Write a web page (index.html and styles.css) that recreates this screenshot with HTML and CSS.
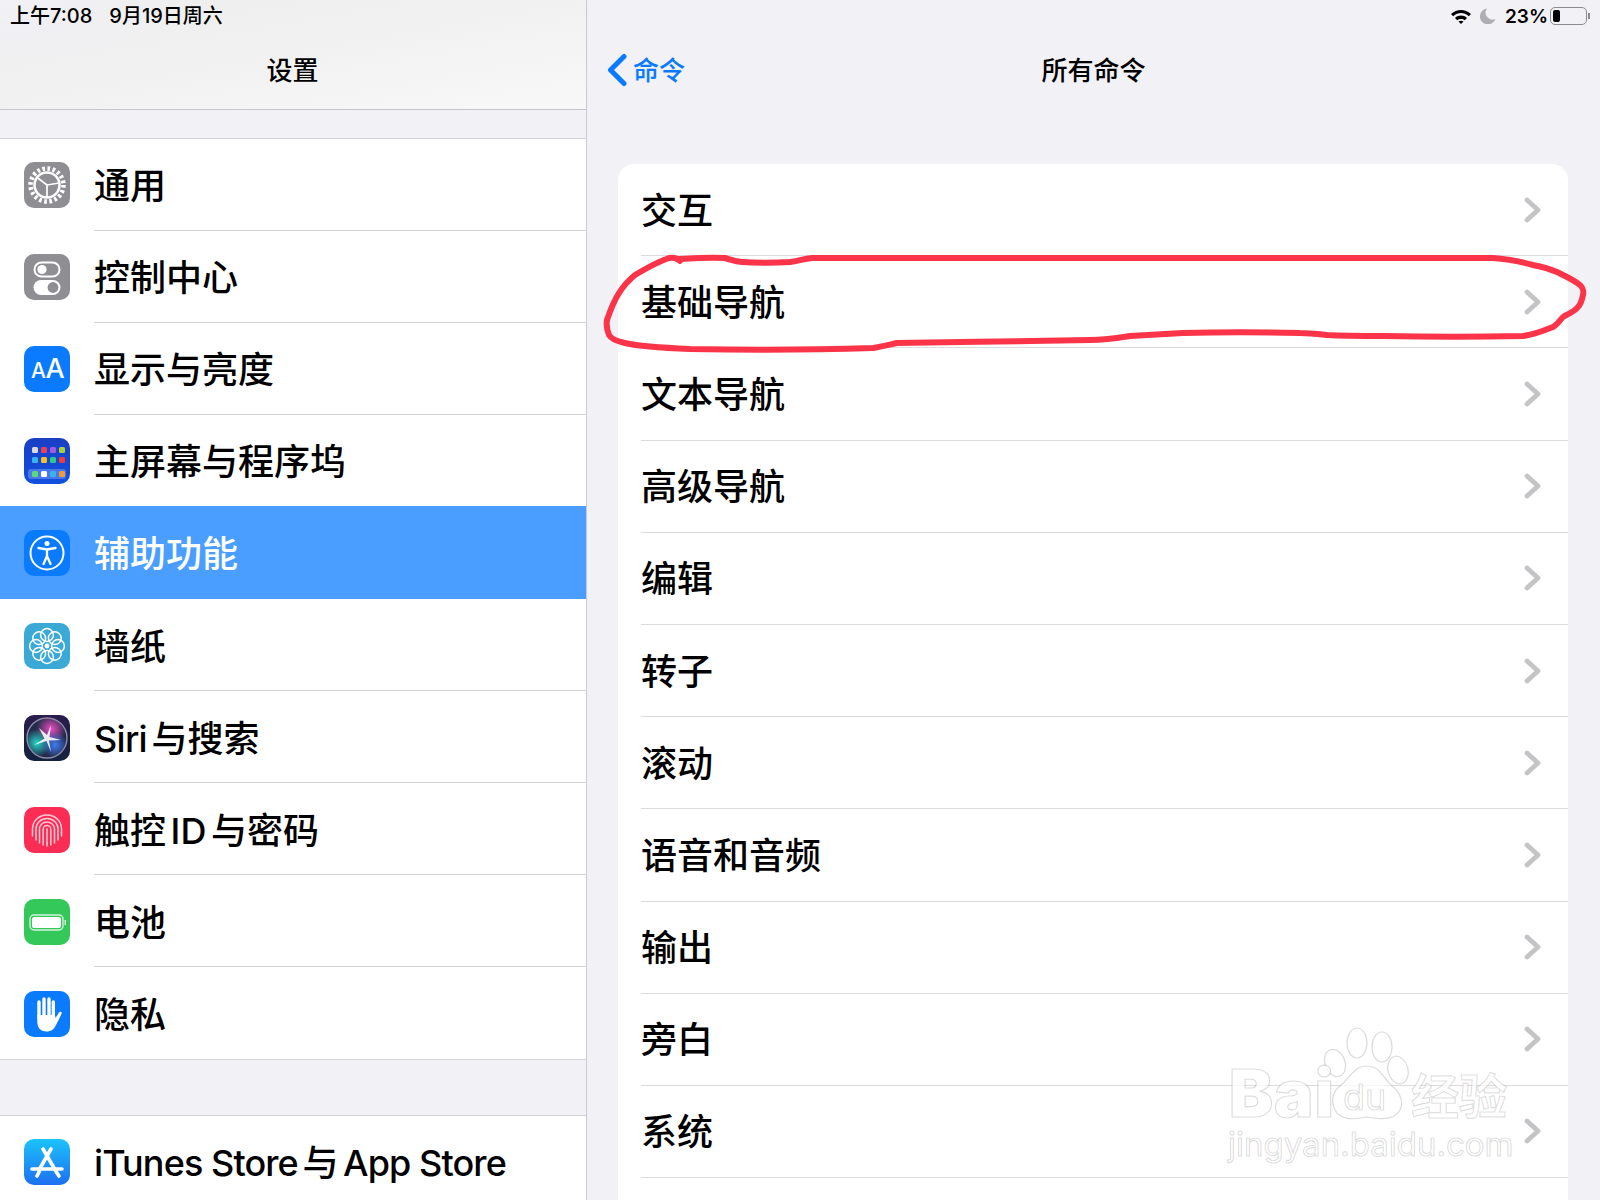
FILE: index.html
```html
<!DOCTYPE html>
<html lang="zh-CN">

<head>
    <meta charset="UTF-8">
    <title>所有命令</title>
    <link rel="stylesheet" href="styles.css">
</head>

<body>

    <div class="page">

        <!-- Settings sidebar -->
        <aside class="sidebar">
            <header class="side-head">
                <div class="status-time"><span>上午7:08</span><span>9月19日周六</span></div>
                <h1 class="nav-title">设置</h1>
            </header>

            <ul class="group group-first">
                <li class="side-row">
                    <span class="icon icon-gray">
                        <svg viewBox="0 0 46 46">
                            <circle cx="23" cy="23" r="16.5" fill="none" stroke="#fff" stroke-width="4.5" stroke-dasharray="2.7 2.48"/>
                            <circle cx="23" cy="23" r="12.5" fill="none" stroke="#fff" stroke-width="2.5"/>
                            <path d="M23 23L12.5 15M23 23L35 21M23 23V36" stroke="#fff" stroke-width="1.7" fill="none"/>
                        </svg>
                    </span>
                    <span class="side-label">通用</span>
                </li>
                <li class="side-row">
                    <span class="icon icon-gray">
                        <svg viewBox="0 0 46 46">
                            <rect x="10.5" y="8.5" width="25" height="14" rx="7" fill="none" stroke="#fff" stroke-width="2"/>
                            <circle cx="18" cy="15.5" r="4.6" fill="#fff"/>
                            <rect x="9.5" y="26" width="27" height="15" rx="7.5" fill="#fff"/>
                            <circle cx="29" cy="33.5" r="5.4" fill="#8e8e93"/>
                        </svg>
                    </span>
                    <span class="side-label">控制中心</span>
                </li>
                <li class="side-row">
                    <span class="icon icon-blue">
                        <svg viewBox="0 0 46 46">
                            <text class="aa-small" x="7" y="32">A</text>
                            <text class="aa-big" x="21.5" y="32">A</text>
                        </svg>
                    </span>
                    <span class="side-label">显示与亮度</span>
                </li>
                <li class="side-row">
                    <span class="icon icon-home">
                        <svg viewBox="0 0 46 46">
                            <rect x="8" y="9" width="6" height="6" rx="1.5" fill="#d9d9e0"/>
                            <rect x="17" y="9" width="6" height="6" rx="1.5" fill="#e8405a"/>
                            <rect x="26" y="9" width="6" height="6" rx="1.5" fill="#a25be8"/>
                            <rect x="35" y="9" width="6" height="6" rx="1.5" fill="#a5d13c"/>
                            <rect x="8" y="19" width="6" height="6" rx="1.5" fill="#35b4f0"/>
                            <rect x="17" y="19" width="6" height="6" rx="1.5" fill="#f5c22c"/>
                            <rect x="26" y="19" width="6" height="6" rx="1.5" fill="#2fc88d"/>
                            <rect x="35" y="19" width="6" height="6" rx="1.5" fill="#ee3b3b"/>
                            <rect x="4" y="31" width="38" height="10" rx="3" fill="#4a78e8"/>
                            <rect x="8" y="33" width="6" height="6" rx="1.5" fill="#5ad97a"/>
                            <rect x="17" y="33" width="6" height="6" rx="1.5" fill="#fff"/>
                            <rect x="26" y="33" width="6" height="6" rx="1.5" fill="#35b4f0"/>
                            <rect x="35" y="33" width="6" height="6" rx="1.5" fill="#f09a3c"/>
                        </svg>
                    </span>
                    <span class="side-label">主屏幕与程序坞</span>
                </li>
                <li class="side-row side-row-active">
                    <span class="icon icon-blue">
                        <svg viewBox="0 0 46 46">
                            <circle cx="23" cy="23" r="16.5" fill="none" stroke="#fff" stroke-width="2"/>
                            <circle cx="23" cy="13.5" r="2.5" fill="#fff"/>
                            <path d="M14.5 18L23 19.5L31.5 18M23 19.5V26M23 26L19.5 34M23 26L26.5 34" fill="none" stroke="#fff" stroke-width="2.3" stroke-linecap="round"/>
                        </svg>
                    </span>
                    <span class="side-label">辅助功能</span>
                </li>
                <li class="side-row">
                    <span class="icon icon-wall">
                        <svg viewBox="0 0 46 46" fill="none" stroke="#fff" stroke-width="1.5">
                            <circle cx="23" cy="12" r="6.4"/>
                            <circle cx="30.8" cy="15.2" r="6.4"/>
                            <circle cx="34" cy="23" r="6.4"/>
                            <circle cx="30.8" cy="30.8" r="6.4"/>
                            <circle cx="23" cy="34" r="6.4"/>
                            <circle cx="15.2" cy="30.8" r="6.4"/>
                            <circle cx="12" cy="23" r="6.4"/>
                            <circle cx="15.2" cy="15.2" r="6.4"/>
                            <circle cx="23" cy="23" r="2.4" fill="#fff" stroke="none"/>
                        </svg>
                    </span>
                    <span class="side-label">墙纸</span>
                </li>
                <li class="side-row">
                    <span class="icon icon-siri">
                        <svg viewBox="0 0 46 46">
                            <defs>
                                <radialGradient id="siriPink" cx="50%" cy="50%" r="50%">
                                    <stop offset="0" stop-color="#e84fc0"/>
                                    <stop offset="1" stop-color="#e84fc0" stop-opacity="0"/>
                                </radialGradient>
                                <radialGradient id="siriTeal" cx="50%" cy="50%" r="50%">
                                    <stop offset="0" stop-color="#27d8c8"/>
                                    <stop offset="1" stop-color="#27d8c8" stop-opacity="0"/>
                                </radialGradient>
                                <radialGradient id="siriBlue" cx="50%" cy="50%" r="50%">
                                    <stop offset="0" stop-color="#3f7cf0"/>
                                    <stop offset="1" stop-color="#3f7cf0" stop-opacity="0"/>
                                </radialGradient>
                                <clipPath id="siriClip"><circle cx="23" cy="23" r="19.5"/></clipPath>
                            </defs>
                            <circle cx="23" cy="23" r="20" fill="#232a4a" stroke="#8a8da6" stroke-width="1.4"/>
                            <g clip-path="url(#siriClip)">
                                <circle cx="27" cy="14" r="15" fill="url(#siriPink)"/>
                                <circle cx="13" cy="28" r="14" fill="url(#siriTeal)"/>
                                <circle cx="31" cy="30" r="13" fill="url(#siriBlue)"/>
                                <path d="M23 20L27 10L25.5 22L37 25L25 25.5L27 37L22.5 26L10 30L20.5 23.5L15 13Z" fill="#fff" opacity=".88"/>
                            </g>
                        </svg>
                    </span>
                    <span class="side-label"><span class="latin">Siri</span> 与搜索</span>
                </li>
                <li class="side-row">
                    <span class="icon icon-pink">
                        <svg viewBox="0 0 46 46" fill="none" stroke="#ffccd6" stroke-width="1.5" stroke-linecap="round">
                            <path d="M8.5 29V22C8.5 14 15 8 23 8S37.5 14 37.5 22V29"/>
                            <path d="M12 33V22C12 16 17 11.5 23 11.5S34 16 34 22V33"/>
                            <path d="M15.5 36V22C15.5 18 19 15 23 15S30.5 18 30.5 22V36"/>
                            <path d="M19.2 38V22C19.2 20 21 18.5 23 18.5S26.8 20 26.8 22V38"/>
                            <path d="M23 22V39"/>
                        </svg>
                    </span>
                    <span class="side-label">触控 ID 与密码</span>
                </li>
                <li class="side-row">
                    <span class="icon icon-green">
                        <svg viewBox="0 0 46 46">
                            <rect x="6" y="16" width="33" height="15" rx="4" fill="none" stroke="#d3f3db" stroke-width="1.4"/>
                            <rect x="8" y="18" width="29" height="11" rx="2.6" fill="#fff"/>
                            <rect x="40.5" y="21" width="1.5" height="5" fill="#d3f3db"/>
                        </svg>
                    </span>
                    <span class="side-label">电池</span>
                </li>
                <li class="side-row">
                    <span class="icon icon-blue">
                        <svg viewBox="0 0 46 46">
                            <path d="M15 11V27M20 8V27M25 8V27M29.3 11V27" stroke="#fff" stroke-width="3.4" stroke-linecap="round" fill="none"/>
                            <path d="M13.3 24H31L31.5 27L35 21.5C36 20 38.5 21 37.5 23L32 34C30 38.5 27 40.5 22.5 40.5C16 40.5 13.3 36 13.3 31Z" fill="#fff"/>
                        </svg>
                    </span>
                    <span class="side-label">隐私</span>
                </li>
            </ul>

            <ul class="group group-second">
                <li class="side-row">
                    <span class="icon icon-store">
                        <svg viewBox="0 0 46 46" fill="none" stroke="#fff" stroke-width="3.6" stroke-linecap="round">
                            <path d="M19 10L33 34L35 37"/>
                            <path d="M27 10L15 31"/>
                            <path d="M8 30H38"/>
                            <path d="M15.5 32L13 37"/>
                        </svg>
                    </span>
                    <span class="side-label"><span class="latin latin-words">iTunes Store</span> 与 <span class="latin latin-words">App Store</span></span>
                </li>
            </ul>
        </aside>

        <!-- All commands detail -->
        <main class="detail">
            <div class="status-right">
                <svg class="wifi" viewBox="0 0 22 16">
                    <path d="M1 6C7 0.5 15 0.5 21 6L18.8 8.3C14 4 8 4 3.2 8.3Z" fill="#000"/>
                    <path d="M5 10C8.5 6.8 13.5 6.8 17 10L14.8 12.3C12.6 10.4 9.4 10.4 7.2 12.3Z" fill="#000"/>
                    <path d="M8.5 13.6C10 12.4 12 12.4 13.5 13.6L11 16Z" fill="#000"/>
                </svg>
                <svg class="moon" viewBox="0 0 16 16">
                    <path d="M7 0.5A8 8 0 1 0 15.5 11A7 7 0 0 1 7 0.5Z" fill="#aeaeb4"/>
                </svg>
                <span class="battery-text">23%</span>
                <span class="battery"><span class="battery-level"></span></span>
                <span class="battery-tip"></span>
            </div>

            <nav class="detail-nav">
                <div class="back">
                    <svg class="back-chevron" viewBox="0 0 22 34">
                        <path d="M18 3.5L4.5 17L18 30.5" fill="none" stroke="#0a7aff" stroke-width="5" stroke-linecap="round" stroke-linejoin="round"/>
                    </svg>
                    <span class="back-label">命令</span>
                </div>
                <h2 class="nav-title">所有命令</h2>
            </nav>

            <ul class="card">
                <li class="cmd-row"><span class="cmd-label">交互</span><svg class="chevron" viewBox="0 0 17 26"><path d="M3 3L14 13L3 23"/></svg></li>
                <li class="cmd-row"><span class="cmd-label">基础导航</span><svg class="chevron" viewBox="0 0 17 26"><path d="M3 3L14 13L3 23"/></svg></li>
                <li class="cmd-row"><span class="cmd-label">文本导航</span><svg class="chevron" viewBox="0 0 17 26"><path d="M3 3L14 13L3 23"/></svg></li>
                <li class="cmd-row"><span class="cmd-label">高级导航</span><svg class="chevron" viewBox="0 0 17 26"><path d="M3 3L14 13L3 23"/></svg></li>
                <li class="cmd-row"><span class="cmd-label">编辑</span><svg class="chevron" viewBox="0 0 17 26"><path d="M3 3L14 13L3 23"/></svg></li>
                <li class="cmd-row"><span class="cmd-label">转子</span><svg class="chevron" viewBox="0 0 17 26"><path d="M3 3L14 13L3 23"/></svg></li>
                <li class="cmd-row"><span class="cmd-label">滚动</span><svg class="chevron" viewBox="0 0 17 26"><path d="M3 3L14 13L3 23"/></svg></li>
                <li class="cmd-row"><span class="cmd-label">语音和音频</span><svg class="chevron" viewBox="0 0 17 26"><path d="M3 3L14 13L3 23"/></svg></li>
                <li class="cmd-row"><span class="cmd-label">输出</span><svg class="chevron" viewBox="0 0 17 26"><path d="M3 3L14 13L3 23"/></svg></li>
                <li class="cmd-row"><span class="cmd-label">旁白</span><svg class="chevron" viewBox="0 0 17 26"><path d="M3 3L14 13L3 23"/></svg></li>
                <li class="cmd-row"><span class="cmd-label">系统</span><svg class="chevron" viewBox="0 0 17 26"><path d="M3 3L14 13L3 23"/></svg></li>
                <li class="cmd-row cmd-row-cut"></li>
            </ul>
        </main>

    </div>

    <!-- Hand drawn circle and watermark lie over the screenshot -->
    <svg class="overlay" viewBox="0 0 1600 1200">
        <path class="ink" d="M680 259C695 258 712 257 725 258C732 260 735 262 742 262C758 263 775 263 790 262C798 261 803 259 812 258C900 258 1300 258 1493 258C1510 259 1522 262 1533 265C1543 267 1550 269 1557 272C1565 276 1574 280 1580 285C1583 288 1584 290 1583 295C1582 300 1581 304 1578 307C1574 312 1568 314 1563 317C1560 320 1557 325 1553 327C1543 331 1533 335 1523 336C1480 337 1430 337 1383 336C1365 336 1345 336 1327 335C1318 334 1310 333 1300 333C1260 332 1220 332 1183 333C1165 334 1147 335 1130 336C1118 338 1108 340 1090 340C1030 341 960 342 897 343C888 345 880 347 873 348C810 350 750 350 690 349C665 348 642 347 625 343C616 341 611 339 609 335C607 330 606 326 607 320C610 311 614 301 619 293C624 285 629 280 635 275C645 269 657 262 669 258C674 257 678 259 680 261"/>

        <g class="mark">
            <ellipse cx="1357" cy="1043" rx="10" ry="15"/>
            <ellipse cx="1382" cy="1047" rx="10" ry="15"/>
            <ellipse cx="1335" cy="1063" rx="10" ry="14" transform="rotate(-20 1335 1063)"/>
            <ellipse cx="1398" cy="1070" rx="10" ry="14" transform="rotate(-15 1398 1070)"/>
            <path d="M1367 1066C1354 1066 1350 1078 1340 1086C1332 1092 1331 1102 1335 1110C1340 1120 1352 1120 1367 1117C1382 1120 1395 1120 1400 1110C1404 1102 1400 1092 1392 1086C1383 1078 1380 1066 1367 1066Z"/>
        </g>
        <text class="mark mark-big" x="1229" y="1117">Bai</text>
        <text class="mark mark-du" x="1343" y="1110">du</text>
        <text class="mark mark-cn" x="1411" y="1114">经验</text>
        <text class="mark mark-url" x="1228" y="1156">jingyan.baidu.com</text>
    </svg>

</body>

</html>
```

FILE: styles.css
```css
:root {
    --bg: #f1f1f6;
    --line: #d4d4d8;
    --blue: #0a7aff;
    --active: #4a9eff;
}

* {
    box-sizing: border-box;
}

html,
body {
    margin: 0;
    height: 1200px;
    overflow: hidden;
}

body {
    position: relative;
    background: var(--bg);
    color: #000;
    font-family: Inter, "Noto Sans CJK SC", sans-serif;
}

ul {
    list-style: none;
    margin: 0;
    padding: 0;
}

.page {
    display: flex;
    height: 1200px;
}

/* sidebar */

.sidebar {
    flex: none;
    width: 587px;
    height: 1200px;
    overflow: hidden;
    border-right: 1px solid #c9c9ce;
}

.side-head {
    height: 110px;
    padding: 4px 0 0 10px;
    border-bottom: 1px solid #c6c6c9;
    background:
        radial-gradient(ellipse 300px 110px at 0 0, #f1f1f7 0%, rgba(241, 241, 247, 0) 70%),
        linear-gradient(170deg, #ededed 0%, #f1f1f1 45%, #f8f8f8 100%);
}

.status-time {
    display: flex;
    gap: 17px;
    height: 24px;
    font-size: 20px;
    line-height: 24px;
    font-weight: 500;
}

.nav-title {
    margin: 0;
    font-size: 26px;
    line-height: 36px;
    font-weight: 500;
    text-align: center;
}

.side-head .nav-title {
    margin: 25px 0 0 -11px;
}

.group {
    background: #fff;
    border-top: 1px solid var(--line);
}

.group-first {
    margin-top: 28px;
    border-bottom: 1px solid var(--line);
}

.group-second {
    margin-top: 55px;
}

.side-row {
    display: flex;
    align-items: center;
    height: 92px;
    padding-left: 24px;
    position: relative;
    font-size: 36px;
    font-weight: 500;
}

.side-row:nth-child(n+6) {
    padding-top: 2px;
}

.side-row:not(:last-child)::after {
    content: "";
    position: absolute;
    left: 94px;
    right: 0;
    bottom: 0;
    height: 1px;
    background: var(--line);
}

.side-row-active {
    height: 93px;
    margin-top: -1px;
    background: var(--active);
    color: #fff;
}

.side-row-active::after,
.side-row:nth-child(4)::after {
    display: none;
}

.side-label {
    margin: 0 0 4px 24px;
    white-space: nowrap;
    word-spacing: -5px;
}

.latin {
    letter-spacing: -0.7px;
}

.latin-words {
    word-spacing: 0;
    letter-spacing: -0.9px;
}

.icon {
    flex: none;
    display: block;
    width: 46px;
    height: 46px;
    border-radius: 10px;
    overflow: hidden;
}

.icon svg {
    display: block;
    width: 46px;
    height: 46px;
}

.icon-gray {
    background: #8e8e93;
}

.icon-blue {
    background: var(--blue);
}

.icon-home {
    background: linear-gradient(180deg, #1a3fc4, #1150e0);
}

.icon-wall {
    background: #3ba9d6;
}

.icon-siri {
    background: linear-gradient(180deg, #2a1c4c, #14223f);
}

.icon-pink {
    background: #fb2d55;
}

.icon-green {
    background: #34c759;
}

.icon-store {
    background: linear-gradient(180deg, #1bc3fb, #1d6ff2);
}

.aa-small,
.aa-big {
    fill: #fff;
    font-family: Inter, sans-serif;
}

.aa-small {
    font-size: 21px;
}

.aa-big {
    font-size: 27px;
}

/* detail */

.detail {
    flex: 1;
    min-width: 0;
    height: 1200px;
    overflow: hidden;
    position: relative;
}

.status-right {
    display: flex;
    align-items: center;
    justify-content: flex-end;
    height: 32px;
    padding-right: 10px;
}

.wifi {
    width: 22px;
    height: 16px;
}

.moon {
    width: 16px;
    height: 16px;
    margin-left: 8px;
}

.battery-text {
    margin-left: 9px;
    font-size: 19px;
    font-weight: 600;
}

.battery {
    display: block;
    width: 37px;
    height: 18px;
    margin-left: 2px;
    padding: 2px;
    border: 1.5px solid #8c8c90;
    border-radius: 5px;
}

.battery-level {
    display: block;
    width: 7px;
    height: 100%;
    border-radius: 2px;
    background: #000;
}

.battery-tip {
    width: 2px;
    height: 6px;
    margin-left: 1px;
    background: #8c8c90;
}

.detail-nav {
    position: relative;
    height: 108px;
    padding-top: 21px;
}

.back {
    position: absolute;
    left: 19px;
    top: 20px;
    display: flex;
    align-items: center;
    height: 36px;
    color: var(--blue);
    font-size: 26px;
    font-weight: 500;
}

.back-chevron {
    width: 22px;
    height: 34px;
    margin-right: 5px;
}

.back-label {
    margin-bottom: 4px;
}

.card {
    margin: 24px 32px 0 31px;
    background: #fff;
    border-radius: 16px 16px 0 0;
}

.cmd-row {
    display: flex;
    align-items: center;
    justify-content: space-between;
    height: 92.2px;
    margin-left: 23px;
    padding-right: 27px;
    border-bottom: 1px solid #dcdce0;
    font-size: 36px;
    font-weight: 500;
}

.cmd-row-cut {
    height: 28px;
    border-bottom: 0;
}

.cmd-label {
    margin-bottom: 4px;
}

.chevron {
    width: 17px;
    height: 26px;
}

.chevron path {
    fill: none;
    stroke: #c4c4c7;
    stroke-width: 4.8;
    stroke-linecap: round;
    stroke-linejoin: round;
}

/* overlay */

.overlay {
    position: absolute;
    left: 0;
    top: 0;
    width: 1600px;
    height: 1200px;
    pointer-events: none;
}

.ink {
    fill: none;
    stroke: #fb3449;
    stroke-width: 6;
    stroke-linecap: round;
    stroke-linejoin: round;
}

.mark {
    fill: rgba(255, 255, 255, 0.75);
    stroke: rgba(0, 0, 0, 0.14);
    stroke-width: 1.2;
}

.mark-big {
    font-family: Inter, sans-serif;
    font-size: 66px;
    font-weight: 900;
    letter-spacing: 1px;
}

.mark-du {
    font-family: Inter, sans-serif;
    font-size: 36px;
    font-weight: 400;
}

.mark-cn {
    font-family: "Noto Sans CJK SC", sans-serif;
    font-size: 48px;
    font-weight: 700;
}

.mark-url {
    font-family: Inter, sans-serif;
    font-size: 33px;
}
```
